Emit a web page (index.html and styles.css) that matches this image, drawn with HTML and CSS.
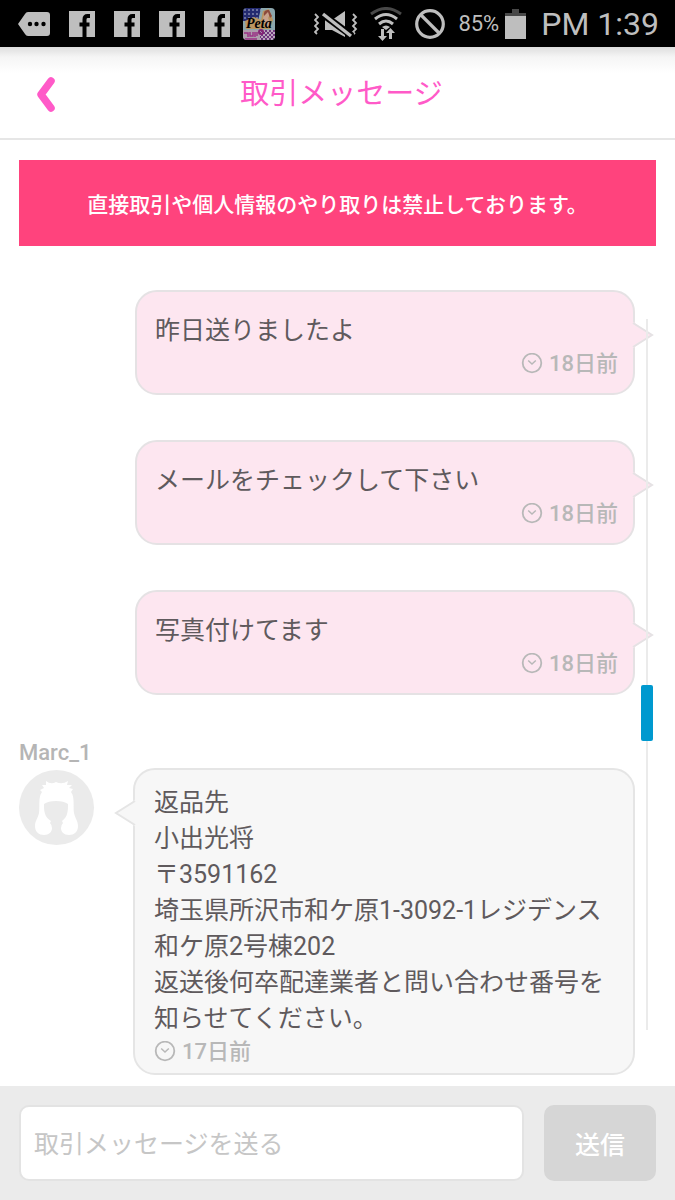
FILE: index.html
```html
<!DOCTYPE html>
<html lang="ja">
<head>
<meta charset="utf-8">
<meta name="viewport" content="width=device-width, initial-scale=1">
<title>取引メッセージ</title>
<link rel="stylesheet" href="styles.css">
</head>
<body>
<svg class="defs" width="0" height="0" aria-hidden="true">
  <symbol id="fb" viewBox="0 0 26 26">
    <path fill="#bebebe" d="M0 0H26V26H0z"/>
    <path fill="none" stroke="#000" stroke-width="4" d="M21 5H18.500Q15.500 5 15.500 8.500V26M10.500 13.500H20.500"/>
  </symbol>
  <symbol id="clock" viewBox="0 0 22 22">
    <circle cx="11" cy="10" r="9.300" fill="none" stroke="currentColor" stroke-width="1.800"/>
    <path d="M7.200 7.500 11 11 14.800 7.500" fill="none" stroke="currentColor" stroke-width="1.500"/>
  </symbol>
</svg>

<div class="status">
  <div class="status-left">
    <svg width="32" height="24" viewBox="0 0 32 24"><path fill="#bebebe" d="M10 0H29Q32 0 32 3V21Q32 24 29 24H10Q8 24 7 22L0 12 7 2Q8 0 10 0z"/><circle cx="12" cy="12" r="2.200"/><circle cx="18.500" cy="12" r="2.200"/><circle cx="25.500" cy="12" r="2.200"/></svg>
    <svg width="26" height="26"><use href="#fb"/></svg>
    <svg width="26" height="26"><use href="#fb"/></svg>
    <svg width="26" height="26"><use href="#fb"/></svg>
    <svg width="26" height="26"><use href="#fb"/></svg>
    <svg class="app" width="32" height="32" viewBox="0 0 32 32">
      <defs>
        <clipPath id="app-clip"><rect width="32" height="32" rx="4"/></clipPath>
        <pattern id="dots" width="4" height="4" patternUnits="userSpaceOnUse"><path fill="#242b70" d="M0 0H4V4H0z"/><circle cx="2" cy="2" r=".8" fill="#c4c8d8"/></pattern>
        <pattern id="checks" width="4" height="4" patternUnits="userSpaceOnUse"><path fill="#bba8bd" d="M0 0H4V4H0z"/><path fill="#70367e" d="M0 0H2V2H0zM2 2H4V4H2z"/></pattern>
      </defs>
      <g clip-path="url(#app-clip)">
        <path fill="#8ca7ad" d="M0 0H32V32H0z"/>
        <path fill="url(#dots)" d="M0 0H18L15 13H0z"/>
        <path fill="#ba9560" d="M2 13 11 9 18 12 20 3 26 1 30 12 27 21H3z"/>
        <path fill="#c9a28c" d="M22 4Q25 1 27 6L25 10 28 17 23 20 20 10z"/>
        <path fill="#8c493b" d="M21 8Q20 1 26 2L29 8 27 10 25 4 23 6z"/>
        <path fill="#ad9dac" d="M0 22H18V32H0z"/>
        <path fill="none" stroke="#9a3085" stroke-width="1.500" d="M1 25H5V29M7 24V28H10V24M12 24V29M14 24V28M2 31H14"/>
        <path fill="url(#checks)" d="M17 22H32V32H17z"/>
        <circle cx="18" cy="24" r="2" fill="none" stroke="#852475" stroke-width="2"/>
        <text class="app-name" x="3" y="20">Peta</text>
      </g>
    </svg>
  </div>
  <div class="status-right">
    <svg width="44" height="30" viewBox="0 0 44 30"><g fill="none" stroke="#bebebe" stroke-width="1.800"><path d="M1 5 4 8 1 11 4 14 1 17 4 20 1 23 3 25M39 5 42 8 39 11 42 14 39 17 42 20 39 23 41 25"/></g><path fill="#bebebe" d="M11 11H18L31 2V28L18 21H11z"/><path stroke="#000" stroke-width="7" d="M7 4 38 27"/><path stroke="#bebebe" stroke-width="3.400" d="M9 5 37 27"/></svg>
    <svg width="32" height="34" viewBox="0 0 32 34"><g fill="none" stroke="#bebebe" stroke-width="3"><path stroke="#484848" d="M1 7Q16-4 31 7"/><path d="M5 12Q16 3 27 12M9 17Q16 11 23 17"/></g><path fill="#bebebe" d="M12 20Q16 17 20 20L16 23zM11 22H14V29H17L12.500 34 8 29H11zM19 32H22V26H25L20.500 21 16 26H19z"/></svg>
    <svg width="32" height="32" viewBox="0 0 32 32"><g fill="none" stroke="#bebebe" stroke-width="3.200"><circle cx="16" cy="16" r="13.300"/><path d="M7 7 25 25"/></g></svg>
    <span class="percent">85%</span>
    <svg class="battery" width="21" height="30" viewBox="0 0 21 30"><path fill="#484848" d="M7 0H14V4H21V8H0V4H7z"/><path fill="#bebebe" d="M0 7H21V30H0z"/></svg>
    <span class="time">PM 1:39</span>
  </div>
</div>

<header class="header">
  <button class="back" type="button" aria-label="戻る"><svg width="24" height="36" viewBox="0 0 24 36"><path d="M18 5 8 18.500 18 32" fill="none" stroke="#ff5ac8" stroke-width="7.500" stroke-linecap="round" stroke-linejoin="round"/></svg></button>
  <h1 class="title">取引メッセージ</h1>
</header>

<main class="chat">
  <p class="notice">直接取引や個人情報のやり取りは禁止しております。</p>
  <article class="bubble sent">
    <svg class="tail" width="22" height="28" viewBox="0 0 22 28"><path fill="#fde6f0" d="M0 0 20 14 0 28z"/><path fill="none" stroke="#e5e2e4" stroke-width="2" d="M1 2 20 14 1 26"/></svg>
    <p class="text">昨日送りましたよ</p>
    <p class="ago"><svg width="22" height="22"><use href="#clock"/></svg>18日前</p>
  </article>
  <article class="bubble sent">
    <svg class="tail" width="22" height="28" viewBox="0 0 22 28"><path fill="#fde6f0" d="M0 0 20 14 0 28z"/><path fill="none" stroke="#e5e2e4" stroke-width="2" d="M1 2 20 14 1 26"/></svg>
    <p class="text">メールをチェックして下さい</p>
    <p class="ago"><svg width="22" height="22"><use href="#clock"/></svg>18日前</p>
  </article>
  <article class="bubble sent">
    <svg class="tail" width="22" height="28" viewBox="0 0 22 28"><path fill="#fde6f0" d="M0 0 20 14 0 28z"/><path fill="none" stroke="#e5e2e4" stroke-width="2" d="M1 2 20 14 1 26"/></svg>
    <p class="text">写真付けてます</p>
    <p class="ago"><svg width="22" height="22"><use href="#clock"/></svg>18日前</p>
  </article>
  <section class="incoming">
    <p class="name">Marc_1</p>
    <svg class="avatar" width="76" height="76" viewBox="0 0 76 76"><circle cx="37.500" cy="37.500" r="37.500" fill="#ebebeb"/><path fill="#fff" d="M27 11Q32 15 37 12Q43 15 49 11L48 15 53 15 50 18 54 19 52 22C56 27 54 37 55 43C56 48 59 51 59 56C59 62 55 65 50 65C45 65 42 62 42 58Q42 55 44 53L43 51C49 47 49 40 49 34Q45 31 37 31Q29 31 25 34C25 40 25 47 32 51L31 53Q33 55 33 58C33 62 30 65 25 65C20 65 16 62 16 56C16 51 19 48 20 43C21 37 19 27 23 22L21 20 25 18 23 15 27 15z"/></svg>
    <article class="bubble received">
      <svg class="tail" width="22" height="28" viewBox="0 0 22 28"><path fill="#f7f7f7" d="M22 0 2 14 22 28z"/><path fill="none" stroke="#e5e5e5" stroke-width="2" d="M21 2 2 14 21 26"/></svg>
      <p class="text">返品先<br>小出光将<br>〒3591162<br>埼玉県所沢市和ケ原1-3092-1レジデンス和ケ原2号棟202<br>返送後何卒配達業者と問い合わせ番号を知らせてください。</p>
      <p class="ago"><svg width="22" height="22"><use href="#clock"/></svg>17日前</p>
    </article>
  </section>
  <div class="track"><div class="thumb"></div></div>
</main>

<form class="composer">
  <input class="field" type="text" aria-label="取引メッセージを送る" placeholder="取引メッセージを送る">
  <button class="send" type="button">送信</button>
</form>
</body>
</html>
```

FILE: styles.css
```css
* { box-sizing: border-box; }
body {
  margin: 0;
  min-height: 100vh;
  display: flex;
  flex-direction: column;
  background: #fff;
  color: #5f5a5d;
  font-family: Roboto, "Noto Sans CJK JP", sans-serif;
}
p, h1 { margin: 0; }
svg { display: block; flex: none; }
button, input { font-family: inherit; }
.defs { position: absolute; }

.status {
  height: 47px;
  padding: 0 16px 0 19px;
  display: flex;
  align-items: center;
  justify-content: space-between;
  background: #000;
  color: #bebebe;
}
.status-left { display: flex; align-items: center; gap: 19px; margin-left: -1px; }
.status-right { display: flex; align-items: center; gap: 12px; }
.app { margin-left: -6px; }
.app-name { font: italic bold 14px "Liberation Serif", serif; fill: #000; }
.percent { font-size: 22px; line-height: 24px; }
.battery { margin-left: -6px; }
.time { font-size: 32px; line-height: 36px; margin-left: 3px; }

.header {
  height: 93px;
  padding: 2px 19px 0 27px;
  display: grid;
  grid-template-columns: 40px 1fr 40px;
  align-items: center;
  border-bottom: 2px solid #e6e6e6;
  background: linear-gradient(#dedede, #f5f5f5 10px, #fff 26px);
}
.back { padding: 0 6px; border: 0; background: none; }
.title {
  text-align: center;
  font-size: 29px;
  line-height: 40px;
  font-weight: 400;
  color: #ff5ac8;
}

.chat {
  flex: 1;
  position: relative;
  padding: 20px 19px 10px;
}
.notice {
  margin-bottom: 44px;
  padding: 30px 16px 26px;
  background: #ff437d;
  color: #fff;
  font-size: 21px;
  line-height: 30px;
  font-weight: 500;
  text-align: center;
}
.bubble {
  position: relative;
  margin-right: 21px;
  border: 2px solid #e5e5e5;
  border-radius: 22px;
}
.sent {
  margin-left: 116px;
  margin-bottom: 45px;
  padding: 21px 15px 14px 18px;
  border-color: #e5e2e4;
  background: #fde6f0;
}
.received { padding: 15px 15px 6px 19px; background: #f7f7f7; }
.tail { position: absolute; top: 29px; }
.sent .tail { left: calc(100% - 1px); }
.received .tail { right: calc(100% - 1px); }
.text { font-size: 25px; line-height: 36px; }
.ago {
  display: flex;
  align-items: center;
  gap: 6px;
  font-size: 22px;
  line-height: 30px;
  font-weight: 500;
  color: #b8b8b8;
}
.sent .ago { justify-content: flex-end; }
.incoming {
  display: grid;
  grid-template-columns: 76px 1fr;
  grid-template-rows: 28px auto;
  column-gap: 38px;
}
.name {
  grid-column: 1 / 3;
  font-size: 22px;
  line-height: 26px;
  font-weight: 500;
  color: #b5b5b5;
}
.avatar { margin-top: 2px; }
.track {
  position: absolute;
  top: 179px;
  bottom: 56px;
  right: 27px;
  width: 2px;
  background: #ebebeb;
}
.thumb {
  position: absolute;
  top: 51.500%;
  left: -5px;
  width: 12px;
  height: 56px;
  border-radius: 2px;
  background: #0099cf;
}

.composer {
  display: flex;
  gap: 20px;
  padding: 19px;
  background: #ebebeb;
}
.field {
  flex: 1;
  min-width: 0;
  height: 76px;
  padding: 2px 13px 0;
  border: 2px solid #e3e3e3;
  border-radius: 10px;
  background: #fff;
  font-size: 25px;
  color: #5f5a5d;
}
.field::placeholder { color: #c6c6c6; opacity: 1; }
.send {
  width: 112px;
  height: 76px;
  border: 0;
  border-radius: 10px;
  background: #d6d6d6;
  color: #fff;
  font-size: 25px;
  font-weight: 500;
}
```
